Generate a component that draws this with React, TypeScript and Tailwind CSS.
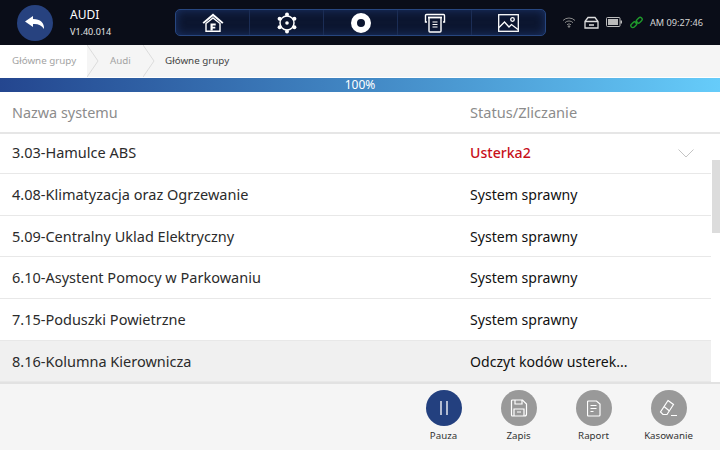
const ROWS = [
  { name: "3.03-Hamulce ABS", status: "Usterka2", h: "h-10 pb-px", red: true },
  { name: "4.08-Klimatyzacja oraz Ogrzewanie", status: "System sprawny", h: "h-[42px]" },
  { name: "5.09-Centralny Uklad Elektryczny", status: "System sprawny", h: "h-[41px] pt-px" },
  { name: "6.10-Asystent Pomocy w Parkowaniu", status: "System sprawny", h: "h-[42px]" },
  { name: "7.15-Poduszki Powietrzne", status: "System sprawny", h: "h-[42px]" },
  { name: "8.16-Kolumna Kierownicza", status: "Odczyt kodów usterek...", h: "h-[41px] pt-px", active: true },
];

function NavIcon({ children }: { children: React.ReactNode }) {
  return <div className="flex h-full flex-1 items-center justify-center border-r border-[#1b2d55] last:border-r-0">{children}</div>;
}

function HomeIcon() {
  return (
    <svg width="22" height="19" viewBox="0 0 22 19">
      <path d="M0.500 9.500 11 0.500l10.500 9-1.300 1.300L11 3.200 1.800 10.800z" fill="#fff" />
      <path d="M4 10.500 11 5l7 5.500v7.700H4z" fill="none" stroke="#fff" strokeWidth="1.400" />
      <path d="M8.500 17.500v-7h5.200v1.900h-3v1.300h2.600v1.800h-2.600v2z" fill="#fff" />
    </svg>
  );
}

function GearIcon() {
  return (
    <svg width="22" height="22" viewBox="0 0 22 22" fill="none" stroke="#fff">
      <circle cx="11" cy="11" r="7" strokeWidth="1.500" />
      <circle cx="11" cy="11" r="1.800" fill="#fff" stroke="none" />
      <g fill="#fff" stroke="none">
        <circle cx="11" cy="2.500" r="2" />
        <circle cx="11" cy="19.500" r="2" />
        <circle cx="3.600" cy="6.800" r="2" />
        <circle cx="18.400" cy="6.800" r="2" />
        <circle cx="3.600" cy="15.200" r="2" />
        <circle cx="18.400" cy="15.200" r="2" />
      </g>
    </svg>
  );
}

function DiscIcon() {
  return (
    <svg width="22" height="22" viewBox="0 0 22 22">
      <circle cx="11" cy="11" r="7" fill="none" stroke="#fff" strokeWidth="6" />
    </svg>
  );
}

function PrintIcon() {
  return (
    <svg width="22" height="20" viewBox="0 0 22 20" fill="none" stroke="#fff" strokeWidth="1.400">
      <path d="M3 9H1.500V2.500a1 1 0 0 1 1-1h17a1 1 0 0 1 1 1V9H19" />
      <path d="M4 4.500h14" strokeWidth="1.800" />
      <path d="M5 4.500V18a1 1 0 0 0 1 1h10a1 1 0 0 0 1-1V4.500" />
      <path d="M8.500 9h5M8.500 11.500h5M8.500 14h5" strokeWidth="1.200" />
    </svg>
  );
}

function ImageIcon() {
  return (
    <svg width="21" height="18" viewBox="0 0 21 18" fill="none" stroke="#fff" strokeWidth="1.300">
      <rect x="0.700" y="0.700" width="19.600" height="16.600" />
      <path d="M1 13.500 6.500 8l4.500 5 2.500-2.500 6.500 5" />
      <circle cx="14.500" cy="5.500" r="1.800" />
    </svg>
  );
}

function Crumb({ label, active }: { label: string; active?: boolean }) {
  return <span className={active ? "text-[#444]" : "text-[#a3a3a3]"}>{label}</span>;
}

function Sep() {
  return (
    <svg className="shrink-0" width="12" height="32" viewBox="0 0 12 32" fill="none" stroke="#dcdcdc" strokeWidth="1">
      <path d="M0 0 11 16 0 32" />
    </svg>
  );
}

function ActionBtn({ label, bg, children }: { label: string; bg: string; children: React.ReactNode }) {
  return (
    <div className="flex w-[75px] flex-col items-center">
      <div className={`flex size-9 items-center justify-center rounded-full ${bg}`}>{children}</div>
      <span className="mt-[3px] text-[9.700px] leading-[14px] text-[#333]">{label}</span>
    </div>
  );
}

export default function App() {
  return (
    <div className="relative flex h-[450px] w-[720px] flex-col overflow-hidden bg-white font-['Noto_Sans',sans-serif]">
      {/* top bar */}
      <div className="flex h-[45px] shrink-0 items-center bg-[#0a0d18] pl-[17px]">
        <div className="flex size-9 items-center justify-center rounded-full bg-[#27427f]">
          <svg width="20" height="13" viewBox="0 0 20 13">
            <path d="M8 0 0 5.500 8 11V8c4.500-.5 8.500 1 11 5 .5-6-3.500-10-11-10z" fill="#fff" />
          </svg>
        </div>
        <div className="ml-[17px] w-[105px] text-white">
          <div className="text-[12px] leading-[16px]">AUDI</div>
          <div className="mt-[3px] text-[9px] leading-[12px] text-[#e5e5e5]">V1.40.014</div>
        </div>
        <div className="flex h-[27px] w-[371px] items-center rounded-[5px] border border-[#27467f] bg-[#0c1630] shadow-[inset_0_0_10px_#1c3468]">
          <NavIcon><HomeIcon /></NavIcon>
          <NavIcon><GearIcon /></NavIcon>
          <NavIcon><DiscIcon /></NavIcon>
          <NavIcon><PrintIcon /></NavIcon>
          <NavIcon><ImageIcon /></NavIcon>
        </div>
        <div className="ml-4 flex items-center">
          <svg width="14" height="12" viewBox="0 0 14 12" fill="none" stroke="#8a8a8a" strokeWidth="1">
            <path d="M1 4.500a8.500 8.500 0 0 1 12 0M3 6.700a5.500 5.500 0 0 1 8 0M5 8.800a2.800 2.800 0 0 1 4 0" />
            <circle cx="7" cy="10.500" r="0.800" fill="#8a8a8a" />
          </svg>
          <svg className="ml-[8px]" width="15" height="13" viewBox="0 0 15 13" fill="none" stroke="#ddd" strokeWidth="1.300">
            <path d="M1 5.500 4 1.500h7l3 4V12H1z" />
            <path d="M1 5.500h13M5 9h5" />
          </svg>
          <svg className="ml-[7px]" width="16" height="10" viewBox="0 0 16 10">
            <rect x="0.500" y="0.500" width="13.500" height="9" rx="1" fill="none" stroke="#bbb" />
            <rect x="2" y="2" width="10" height="6" fill="#bbb" />
            <rect x="14.500" y="3.500" width="1.500" height="3" fill="#bbb" />
          </svg>
          <svg className="ml-[8px]" width="13" height="13" viewBox="0 0 13 13" fill="none" stroke="#1f9a2c" strokeWidth="1.400">
            <path d="M5.500 7.500 7.500 5.500" />
            <rect x="0.500" y="6.800" width="6.500" height="4" rx="2" transform="rotate(-45 3.700 8.800)" />
            <rect x="6" y="2.200" width="6.500" height="4" rx="2" transform="rotate(-45 9.300 4.200)" />
          </svg>
          <span className="ml-[7px] whitespace-nowrap text-[9.200px] text-[#d4d4d4]">AM 09:27:46</span>
        </div>
      </div>

      {/* breadcrumb */}
      <div className="flex h-[32px] shrink-0 items-center bg-[#f5f5f5] text-[9.800px] leading-[32px]">
        <div className="flex h-full w-[87px] items-center bg-white pl-3">
          <Crumb label="Główne grupy" />
        </div>
        <Sep />
        <div className="flex h-full w-[44px] items-center pl-[11px]">
          <Crumb label="Audi" />
        </div>
        <Sep />
        <div className="ml-[10px]">
          <Crumb label="Główne grupy" active />
        </div>
      </div>

      {/* progress */}
      <div className="mt-[1px] flex h-[14px] shrink-0 items-center justify-center bg-gradient-to-r from-[#24468f] to-[#66ccfa] text-[12px] leading-[14px] text-white">
        100%
      </div>

      {/* table head */}
      <div className="flex h-[42px] shrink-0 items-center border-b-2 border-[#e6e6e6] px-3 pt-[1px] text-[14.400px] text-[#8c8c8c]">
        <span className="w-[458px]">Nazwa systemu</span>
        <span className="text-[14.600px]">Status/Zliczanie</span>
      </div>

      {/* rows */}
      <div className="w-[711px] flex-1">
        {ROWS.map((r) => (
          <div
            key={r.name}
            className={`flex ${r.h} items-center border-b border-[#e8e8e8] px-3 text-[#2b2b2b] ${r.active ? "bg-[#f0f0f0]" : ""}`}
          >
            <span className="w-[458px] text-[14.500px]">{r.name}</span>
            <span className={`text-[14.100px] ${r.red ? "font-medium text-[#c8101a]" : "text-[#111]"}`}>{r.status}</span>
            {r.red && (
              <svg className="ml-auto mr-[5px]" width="16" height="9" viewBox="0 0 16 9" fill="none" stroke="#c4c4c4">
                <path d="M0.500 0.500 8 8l7.500-7.500" />
              </svg>
            )}
          </div>
        ))}
      </div>

      {/* scrollbar */}
      <div className="absolute left-[712px] top-[160px] h-[73px] w-2 bg-[#dcdcdc]" />

      {/* footer */}
      <div className="flex h-[68px] shrink-0 items-start justify-end border-t-2 border-[#e2e2e2] bg-[#f5f5f5] pr-[14px] pt-[6px]">
        <div className="flex">
          <ActionBtn label="Pauza" bg="bg-[#23407f]">
            <svg width="14" height="16" viewBox="0 0 14 16" stroke="#fff" strokeWidth="1.300">
              <path d="M4 1v14M10 1v14" />
            </svg>
          </ActionBtn>
          <ActionBtn label="Zapis" bg="bg-[#999]">
            <svg width="18" height="18" viewBox="0 0 18 18" fill="none" stroke="#fff" strokeWidth="1.200">
              <path d="M2.500 1h10l4 4v10a2 2 0 0 1-2 2h-12a1 1 0 0 1-1-1V2a1 1 0 0 1 1-1z" />
              <path d="M5 1v4h7V1M4 17v-7h10v7M7 13h4" />
            </svg>
          </ActionBtn>
          <ActionBtn label="Raport" bg="bg-[#999]">
            <svg width="14" height="17" viewBox="0 0 14 17" fill="none" stroke="#fff" strokeWidth="1.200">
              <path d="M1.500 1h8l3.500 3v11a1 1 0 0 1-1 1H1.500a1 1 0 0 1-1-1V2a1 1 0 0 1 1-1z" />
              <path d="M3.500 5.500h6M3.500 8.500h6M3.500 11.500h3" />
            </svg>
          </ActionBtn>
          <ActionBtn label="Kasowanie" bg="bg-[#999]">
            <svg width="20" height="18" viewBox="0 0 20 18" fill="none" stroke="#fff" strokeWidth="1.200">
              <path d="M9 1.500 14.500 5.500 8 15.500H4L1.500 13z" />
              <path d="M5 7.500 10.500 12M12 16.500h6" />
            </svg>
          </ActionBtn>
        </div>
      </div>
    </div>
  );
}
